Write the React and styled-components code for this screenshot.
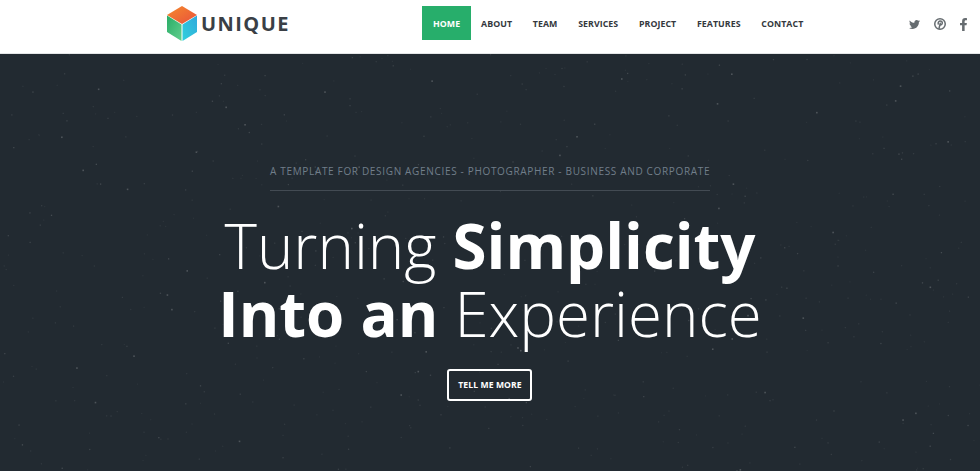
import React from "react";
import styled, { createGlobalStyle } from "styled-components";
import { FaTwitter, FaFacebookF } from "react-icons/fa";

const Global = createGlobalStyle`
  html, body { margin: 0; padding: 0; background: #fff; }
  body { font-family: "Open Sans", "Liberation Sans", sans-serif; overflow: hidden; }
`;
const Page = styled.div`width: 980px; height: 471px; display: flex; flex-direction: column; overflow: hidden;`;
const Header = styled.header`
  height: 53px; background: #fff; border-bottom: 1px solid #e4e6e7; display: flex; align-items: flex-start; flex: none;
`;
const Brand = styled.a`
  margin: 6px 0 0 167px; width: 255px; height: 34px; display: flex; align-items: center; gap: 3px; flex: none;
`;
const BrandName = styled.span`
  font-size: 20px; font-weight: 700; letter-spacing: 1.45px; color: #3a3f46; line-height: 34px; padding-top: 2px;
`;
const Nav = styled.nav`margin-top: 6px; display: flex; align-items: stretch; height: 34px;`;
const NavItem = styled.a`
  display: flex; align-items: center; justify-content: center; box-sizing: border-box;
  padding: 1px ${p => (p.$active ? 11 : 10.4)}px 0;
  margin-right: ${p => (p.$active ? -0.5 : 0)}px;
  font-size: 8.8px; font-weight: 700; letter-spacing: 0.05px;
  color: ${p => (p.$active ? "#fff" : "#34383d")};
  background: ${p => (p.$active ? "#27ae6b" : "transparent")};
`;
const Social = styled.div`
  margin: 7px 10px 0 auto; display: flex; align-items: center; height: 34px; color: #666c70;
`;
const SocialIcon = styled.span`display: flex; margin-left: ${p => p.$gap}px;`;
const Hero = styled.section`
  position: relative; flex: 1; background: #222a31; display: flex; flex-direction: column; align-items: center; overflow: hidden;
`;
const Stars = styled.svg`position: absolute; inset: 0; width: 100%; height: 100%;`;
const Content = styled.div`position: relative; display: flex; flex-direction: column; align-items: center; padding-top: 109px;`;
const Tagline = styled.p`
  margin: 0; width: 440px; padding-bottom: 11px; border-bottom: 1px solid #434b53; text-align: center;
  font-size: 10px; font-weight: 500; line-height: 16px; letter-spacing: 0.67px; color: #717e8a; white-space: nowrap;
`;
const Title = styled.h1`
  margin: 20px 0 0; font-size: 61.8px; line-height: 68px; font-weight: 300; color: #fff; text-align: center; white-space: nowrap;
`;
const Strong = styled.strong`font-weight: 700;`;
const Button = styled.a`
  margin-top: 22px; width: 85px; height: 32px; box-sizing: border-box; border: 2px solid #fff; border-radius: 3px;
  display: flex; align-items: center; justify-content: center;
  font-size: 8.6px; font-weight: 700; color: #fff; letter-spacing: 0.1px;
`;

const Cube = () => (
  <svg width="31" height="35" viewBox="0 0 31 35">
    <defs>
      <linearGradient id="cubeTop" x1="0" y1="0" x2="1" y2="1">
        <stop offset="0" stopColor="#f58a2c" />
        <stop offset="1" stopColor="#e9503c" />
      </linearGradient>
      <linearGradient id="cubeLeft" x1="0" y1="0" x2="1" y2="1">
        <stop offset="0" stopColor="#29ac66" />
        <stop offset="1" stopColor="#62cf8e" />
      </linearGradient>
      <linearGradient id="cubeRight" x1="1" y1="0" x2="0" y2="1">
        <stop offset="0" stopColor="#31a9dc" />
        <stop offset="1" stopColor="#2fd0dc" />
      </linearGradient>
    </defs>
    <path d="M15 0 30 9 15 18 0 9Z" fill="url(#cubeTop)" />
    <path d="M0 9.500 14.500 18.500V35L0 26Z" fill="url(#cubeLeft)" />
    <path d="M30 9.500 15.500 18.500V35L30 26Z" fill="url(#cubeRight)" />
  </svg>
);
const Pinterest = () => (
  <svg width="12" height="12" viewBox="0 0 24 24" fill="none" stroke="currentColor" strokeWidth="3" strokeLinecap="round">
    <circle cx="12" cy="12" r="10.500" />
    <path d="M10 21 12.500 10.500M8.500 12c-1-3.500 1.500-6 4-6 3 0 4.500 2.200 4 4.700-.5 2.500-2.500 3.800-4.500 3" />
  </svg>
);

const navItems = ["ABOUT", "TEAM", "SERVICES", "PROJECT", "FEATURES", "CONTACT"];

// Seeded pseudo-random scatter: many faint stars and a few brighter ones.
const stars = (() => {
  let s = 12345;
  const r = () => ((s = (s * 16807) % 2147483647) / 2147483647);
  return Array.from({ length: 620 }, (_, i) => ({
    x: r() * 980, y: r() * 417,
    o: i % 12 === 0 ? 0.2 : 0.04 + r() * r() * 0.14,
    d: i % 12 === 0 ? 1.6 : 1.3,
  }));
})();

export default function App() {
  return (
    <Page>
      <Global />
      <Header>
        <Brand><Cube /><BrandName>UNIQUE</BrandName></Brand>
        <Nav>
          <NavItem $active>HOME</NavItem>
          {navItems.map(t => <NavItem key={t}>{t}</NavItem>)}
        </Nav>
        <Social>
          <SocialIcon $gap={0}><FaTwitter size={11} /></SocialIcon>
          <SocialIcon $gap={14}><Pinterest /></SocialIcon>
          <SocialIcon $gap={11}><FaFacebookF size={13} /></SocialIcon>
        </Social>
      </Header>
      <Hero>
        <Stars viewBox="0 0 980 417">
          {stars.map((p, i) => (
            <rect key={i} x={p.x} y={p.y} width={p.d} height={p.d} fill="#fff" opacity={p.o} />
          ))}
        </Stars>
        <Content>
          <Tagline>A TEMPLATE FOR DESIGN AGENCIES - PHOTOGRAPHER - BUSINESS AND CORPORATE</Tagline>
          <Title>Turning <Strong>Simplicity</Strong><br /><Strong>Into an</Strong> Experience</Title>
          <Button>TELL ME MORE</Button>
        </Content>
      </Hero>
    </Page>
  );
}
